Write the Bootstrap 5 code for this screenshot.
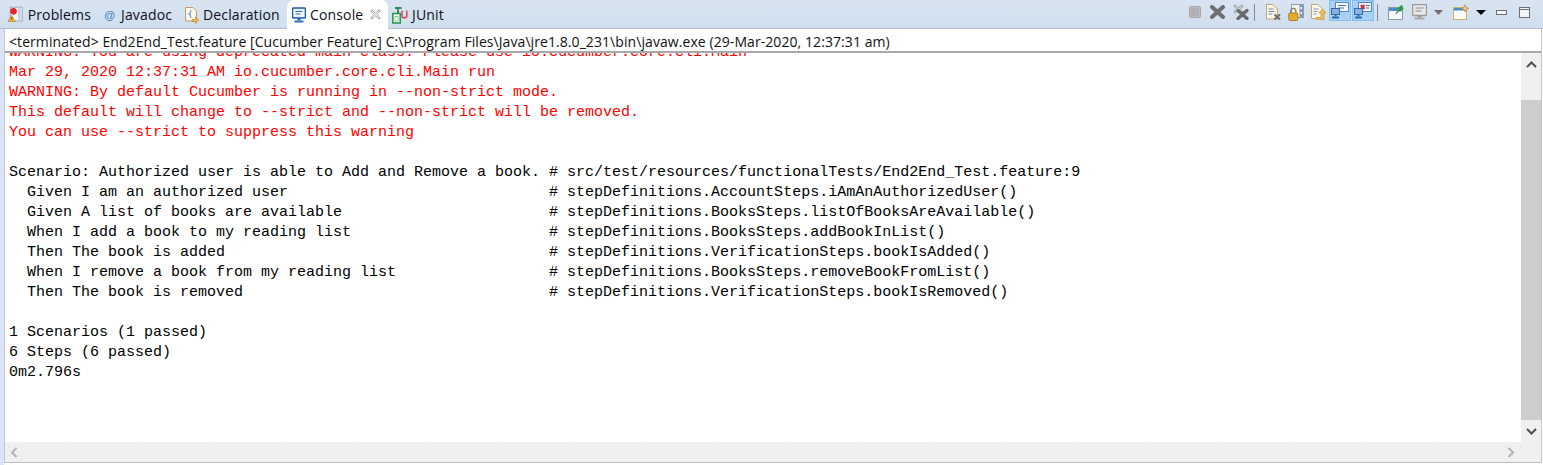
<!DOCTYPE html>
<html lang="en">
<head>
<meta charset="utf-8">
<title>Console</title>
<link href="https://cdn.jsdelivr.net/npm/bootstrap@5.3.0/dist/css/bootstrap.min.css" rel="stylesheet">
<style>
html,body{height:465px;overflow:hidden;background:#fff}
.shell{height:465px;border-left:4px solid #dbe4f6;padding-right:1px;padding-bottom:2px}
.tabbar{height:29px;margin-left:-4px;margin-right:-1px;background:linear-gradient(#d8e4f1,#cfdeee);border-bottom:1px solid #b4bccb;font:14px "Open Sans",sans-serif;color:#10101c}
.vtab{height:28px;white-space:nowrap;letter-spacing:.15px}
.vt1{padding:2px 6px 1px 8px;width:97px}.vt2{padding:2px 0 1px 6px;width:81px}.vt3{padding:2px 0 1px 6px;width:109px}
.vt4{padding:2px 0 2px 5px;width:101px;background:#fff;border-radius:7px 7px 0 0;height:29px;margin-bottom:-1px}
.vt5{padding:2px 0 1px 4px}
.gp4{gap:4px}.gp5{gap:5px}
.atsign{width:13px;font:bold 11px "Liberation Sans",sans-serif;color:#4f86bf;text-align:center;letter-spacing:0}
.tlabel{width:52px}
.tclose{margin-left:4px}
.tools{padding-right:7px;height:28px}
.slot{height:28px;padding-bottom:4px}
.w11{width:11px}.w15{width:15px}.w22{width:22px}.w23{width:23px}.w24{width:24px}.w29{width:29px}
.on{height:21px;margin:0 1px 4px 0;background:#a9d1f7;border:1px solid #86bdf2;padding:0}
.vsep{width:1px;height:17px;background:#7f8a95;margin-top:-3px}
.sepa{margin-left:2px;margin-right:6px}.sepb{margin-left:2px;margin-right:6px}
.frame{border-left:1px solid #c6c6c6;border-right:1px solid #c6c6c6;border-bottom:1px solid #bdbdbd;min-height:0}
.statusline{height:24px;flex:none;border-bottom:2px solid #a9a9a9;font:14px "Open Sans",sans-serif;color:#111;padding:2px 0 0 4px;white-space:nowrap;line-height:22px;letter-spacing:.073px}
.outbox{min-height:0}
.outtext{margin:-10px 0 0;padding-left:4px;font:15px/20px "Liberation Mono",monospace;color:#000;overflow:hidden;white-space:pre}
.err{color:#ff0000}
.dots{background-color:#f0f0f0;background-image:radial-gradient(circle,#dcdcdc .7px,transparent .8px);background-size:9px 9px}
.vbar{width:20px;flex:none}
.vhead{height:47px}
.thumb{height:320px;background:#cdcdcd}
.hbar{height:20px;flex:none;padding:0 2px 0 5px}
</style>
</head>
<body>
<div class="shell d-flex flex-column">
  <div class="tabbar d-flex flex-shrink-0">
    <div class="vtab vt1 d-flex align-items-center gp5 nav-item">
      <svg width="16" height="18" viewBox="0 0 16 18"><rect x="2.500" y=".5" width="13" height="15" fill="#f2f4f6" stroke="#98a6b5"/><rect x="11" y="1" width="3" height="14" fill="#c4d3e4"/><circle cx="6" cy="5" r="3.600" fill="#e3262c"/><path d="M4 9.500 8 16H0z" fill="#f3b93a" stroke="#b57c19" stroke-width=".7"/><rect x="3.600" y="11.500" width="1" height="2.500" fill="#5a3b05"/></svg>
      <span>Problems</span>
    </div>
    <div class="vtab vt2 d-flex align-items-center gp5 nav-item">
      <span class="atsign">@</span>
      <span>Javadoc</span>
    </div>
    <div class="vtab vt3 d-flex align-items-center gp4 nav-item">
      <svg width="15" height="18" viewBox="0 0 15 18"><path d="M1.500 1.500H9L12.500 5V15H1.500z" fill="#fbf7ea" stroke="#bda36a"/><path d="M7.500 4.500C6 4.500 6.500 6.500 6 7.500L5 8l1 .5c.5 1 0 3 1.500 3" fill="none" stroke="#5f8fbd" stroke-width="1.100"/><path d="M8 13.500h3.500V11l3.500 3.300-3.500 3.200V15.500H8z" fill="#eeb94d" stroke="#b4802a" stroke-width=".6"/></svg>
      <span>Declaration</span>
    </div>
    <div class="vtab vt4 d-flex align-items-center gp4 nav-item">
      <svg width="14" height="16" viewBox="0 0 14 16"><rect x=".5" y="1" width="13" height="10" rx="1" fill="#cfe0f4" stroke="#1f5f9f" stroke-width="1.400"/><rect x="2" y="2.700" width="10" height="6.800" fill="#f2f7fd"/><path d="M3.500 4.500h7M3.500 7h5" stroke="#2f6ca8"/><rect x="5.500" y="11.500" width="3" height="2" fill="#1f5f9f"/><rect x="2.500" y="13.500" width="9" height="2" fill="#2e74b5"/></svg>
      <span class="tlabel">Console</span>
      <svg class="tclose" width="11" height="11" viewBox="0 0 11 11"><path d="M2 .8 5.500 4.200 9 .8 10.200 2 6.800 5.500 10.200 9 9 10.200 5.500 6.800 2 10.200.8 9 4.200 5.500.8 2z" fill="#fff" stroke="#8c8c8c" stroke-width=".9"/></svg>
    </div>
    <div class="vtab vt5 d-flex align-items-center gp4 nav-item">
      <svg width="16" height="18" viewBox="0 0 16 18"><rect x=".8" y="7.500" width="7.500" height="9.500" fill="#e8f5e9" stroke="#229a4d" stroke-width="1.500"/><path d="M3 10.500h3.200v3.500L4.600 15.500 3 14z" fill="#fff" stroke="#4da96c" stroke-width=".6"/><path d="M3 2h6.500M6 2v6" stroke="#2c8a52" stroke-width="1.800"/><path d="M10 4.500v5.200c0 2.800 4.800 2.800 4.800 0V4.500" fill="none" stroke="#d9485e" stroke-width="1.500"/></svg>
      <span>JUnit</span>
    </div>
    <div class="tools ms-auto d-flex">
      <div class="slot w23 d-flex align-items-center justify-content-center"><svg width="12" height="12" viewBox="0 0 12 12"><rect x=".5" y=".5" width="11" height="11" rx="1" fill="#bcbcbc" stroke="#a5a5a5"/><rect x="2" y="2" width="8" height="8" fill="#b0b0b0"/></svg></div>
      <div class="slot w23 d-flex align-items-center justify-content-center"><svg width="15" height="14" viewBox="0 0 15 14"><path d="M2 2 13 12M13 2 2 12" stroke="#6e6e6e" stroke-width="4" stroke-linecap="round"/></svg></div>
      <div class="slot w23 d-flex align-items-center justify-content-center"><svg width="16" height="16" viewBox="0 0 16 16"><path d="M2 2 9 8M9 2 2 8" stroke="#a0a0a0" stroke-width="2.600" stroke-linecap="round"/><path d="M2 2 9 8M9 2 2 8" stroke="#e8e8e8" stroke-width="1"/><path d="M5 6.500 14 14.500M14 6.500 5 14.500" stroke="#686868" stroke-width="3.300" stroke-linecap="round"/></svg></div>
      <div class="vsep sepa align-self-center"></div>
      <div class="slot w23 d-flex align-items-center justify-content-center"><svg width="16" height="16" viewBox="0 0 16 16"><path d="M1.500.5H8L12.500 5v10H1.500z" fill="#fbf6e6" stroke="#b9a67a"/><path d="M3.500 5h5M3.500 7.500h6M3.500 10h4" stroke="#6a84b8"/><path d="M9.500 10.500 15 15.500M15 10.500 9.500 15.500" stroke="#6c6c6c" stroke-width="2"/></svg></div>
      <div class="slot w23 d-flex align-items-center justify-content-center"><svg width="16" height="17" viewBox="0 0 16 17"><rect x="3.500" y=".5" width="12" height="13" fill="#f6f4e4" stroke="#8ba1b4"/><rect x="11.500" y="1" width="3.500" height="12" fill="#7e99b1"/><rect x="12.500" y="3" width="1.500" height="2" fill="#fff"/><rect x="12.500" y="8" width="1.500" height="2" fill="#fff"/><rect x=".8" y="9" width="9" height="7.500" rx="1" fill="#e6ab2c" stroke="#9c6d13" stroke-width=".8"/><path d="M2.800 9V6.800a2.500 2.500 0 0 1 5 0V9" fill="none" stroke="#8c8370" stroke-width="1.300"/></svg></div>
      <div class="slot w22 d-flex align-items-center justify-content-center"><svg width="16" height="16" viewBox="0 0 16 16"><path d="M1.500.5H8L12.500 5v9.500H1.500z" fill="#fbf6e6" stroke="#b9a67a"/><path d="M3.500 5h5M3.500 7.500h4M3.500 10h3" stroke="#8396bd"/><path d="M6 13.500h5V9H8.800l3.700-4 3.500 4h-2v6.500H6z" fill="#efc15a" stroke="#b58a31" stroke-width=".6"/></svg></div>
      <div class="on w22 d-flex align-items-center justify-content-center"><svg width="18" height="17" viewBox="0 0 18 17"><rect x="4.500" y=".5" width="13" height="9" fill="#f4f8fc" stroke="#4e87c0"/><path d="M7 3.500h8M7 6h6" stroke="#3f76ae"/><rect x=".5" y="6.500" width="8" height="6" fill="#8ab2dc" stroke="#2e6ba8"/><rect x="3.500" y="12.500" width="2" height="2" fill="#2e6ba8"/><rect x="1" y="14.500" width="7" height="2" fill="#2e6ba8"/></svg></div>
      <div class="on w22 d-flex align-items-center justify-content-center"><svg width="18" height="17" viewBox="0 0 18 17"><rect x="4.500" y=".5" width="13" height="9" fill="#f4f8fc" stroke="#4e87c0"/><path d="M6.800 2.800 10.500 7M10.500 2.800 6.800 7" stroke="#e02b35" stroke-width="2"/><path d="M12 3.500h4M12 6h3" stroke="#3f76ae"/><rect x=".5" y="6.500" width="8" height="6" fill="#8ab2dc" stroke="#2e6ba8"/><rect x="3.500" y="12.500" width="2" height="2" fill="#2e6ba8"/><rect x="1" y="14.500" width="7" height="2" fill="#2e6ba8"/></svg></div>
      <div class="vsep sepb align-self-center"></div>
      <div class="slot w23 d-flex align-items-center justify-content-center"><svg width="16" height="16" viewBox="0 0 16 16"><rect x=".5" y="3.500" width="14" height="12" fill="#f5f8fb" stroke="#8c9aa8"/><rect x="1" y="4" width="13" height="3" fill="#4f8ccb"/><path d="M8 10 11 6" stroke="#666" stroke-width="1.200"/><path d="M9 4.500 14 .8 15.500 5 12 8z" fill="#2e9d47"/></svg></div>
      <div class="slot w24 d-flex align-items-center justify-content-center"><svg width="15" height="16" viewBox="0 0 15 16"><rect x=".5" y=".5" width="14" height="11" rx="1" fill="#e8e8e8" stroke="#9a9a9a" stroke-width="1.500"/><path d="M3.500 4h8M3.500 7h6" stroke="#8c8c8c" stroke-width="1.200"/><rect x="5.500" y="12" width="4" height="1.500" fill="#9a9a9a"/><rect x="2.500" y="13.500" width="10" height="2" fill="#a5a5a5"/></svg></div>
      <div class="slot w15 d-flex align-items-center justify-content-center"><svg width="9" height="5" viewBox="0 0 9 5"><path d="M0 0H9L4.500 5z" fill="#6f6f6f"/></svg></div>
      <div class="slot w29 d-flex align-items-center justify-content-center"><svg width="16" height="16" viewBox="0 0 16 16"><rect x=".5" y="3.500" width="13" height="12" fill="#fbfbf3" stroke="#c9b26f"/><rect x="1" y="4" width="12" height="2.500" fill="#4f8ccb"/><path d="M12 .8 13 3.500l2.500 1-2.500 1L12 8l-1-2.500-2.500-1 2.500-1z" fill="#f5d68c" stroke="#b3843a" stroke-width=".7"/></svg></div>
      <div class="slot w11 d-flex align-items-center justify-content-center"><svg width="10" height="5" viewBox="0 0 10 5"><path d="M0 0H10L5 5z" fill="#000"/></svg></div>
      <div class="slot w22 ms-1 d-flex align-items-center justify-content-center"><svg width="11" height="5" viewBox="0 0 11 5"><rect x=".5" y=".5" width="10" height="4" fill="#f3f5f8" stroke="#6f6f6f"/></svg></div>
      <div class="slot w24 d-flex align-items-center justify-content-center"><svg width="11" height="11" viewBox="0 0 11 11"><rect x=".5" y=".5" width="10" height="10" fill="#f3f5f8" stroke="#6f6f6f"/><path d="M1 2.500h9" stroke="#6f6f6f"/></svg></div>
    </div>
  </div>
  <div class="frame bg-white flex-grow-1 d-flex flex-column">
    <div class="statusline">&lt;terminated&gt; End2End_Test.feature [Cucumber Feature] C:\Program Files\Java\jre1.8.0_231\bin\javaw.exe (29-Mar-2020, 12:37:31 am)</div>
    <div class="d-flex flex-grow-1 outbox">
      <div class="flex-grow-1 overflow-hidden">
<pre class="outtext"><span class="err">WARNING: You are using deprecated main class. Please use io.cucumber.core.cli.Main
Mar 29, 2020 12:37:31 AM io.cucumber.core.cli.Main run
WARNING: By default Cucumber is running in --non-strict mode.
This default will change to --strict and --non-strict will be removed.
You can use --strict to suppress this warning</span>

Scenario: Authorized user is able to Add and Remove a book. # src/test/resources/functionalTests/End2End_Test.feature:9
  Given I am an authorized user                             # stepDefinitions.AccountSteps.iAmAnAuthorizedUser()
  Given A list of books are available                       # stepDefinitions.BooksSteps.listOfBooksAreAvailable()
  When I add a book to my reading list                      # stepDefinitions.BooksSteps.addBookInList()
  Then The book is added                                    # stepDefinitions.VerificationSteps.bookIsAdded()
  When I remove a book from my reading list                 # stepDefinitions.BooksSteps.removeBookFromList()
  Then The book is removed                                  # stepDefinitions.VerificationSteps.bookIsRemoved()

1 Scenarios (1 passed)
6 Steps (6 passed)
0m2.796s</pre>
      </div>
      <div class="vbar dots d-flex flex-column">
        <div class="vhead d-flex justify-content-center pt-2"><svg width="11" height="7" viewBox="0 0 11 7"><path d="M1 6 5.500 1.500 10 6" fill="none" stroke="#505050" stroke-width="2"/></svg></div>
        <div class="thumb"></div>
        <div class="flex-grow-1 d-flex justify-content-center align-items-center"><svg width="11" height="7" viewBox="0 0 11 7"><path d="M1 1 5.500 5.500 10 1" fill="none" stroke="#505050" stroke-width="2"/></svg></div>
      </div>
    </div>
    <div class="hbar dots d-flex justify-content-between align-items-center">
      <svg width="8" height="11" viewBox="0 0 8 11"><path d="M6.500 1 2 5.500 6.500 10" fill="none" stroke="#b5b5b5" stroke-width="2.200"/></svg>
      <svg class="me-4" width="8" height="11" viewBox="0 0 8 11"><path d="M1.500 1 6 5.500 1.500 10" fill="none" stroke="#b5b5b5" stroke-width="2.200"/></svg>
    </div>
  </div>
</div>
<script src="https://cdn.jsdelivr.net/npm/bootstrap@5.3.0/dist/js/bootstrap.bundle.min.js"></script>
</body>
</html>
